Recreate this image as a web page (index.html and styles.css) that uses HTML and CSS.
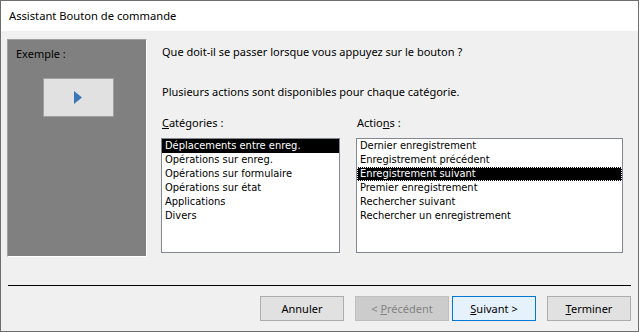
FILE: index.html
```html
<!DOCTYPE html>
<html lang="fr">
<head>
<meta charset="utf-8">
<title>Assistant Bouton de commande</title>
<link rel="stylesheet" href="styles.css">
</head>
<body>
<div class="window">
  <div class="titlebar">Assistant Bouton de commande</div>
  <div class="body">
    <div class="main">
      <div class="example">
        <div class="example-label">Exemple :</div>
        <div class="example-btn">
          <svg width="10" height="14" viewBox="0 0 10 14"><polygon points="0,0 8,6.5 0,13" fill="#3b77b7"/></svg>
        </div>
      </div>
      <div class="right">
        <p class="q">Que doit-il se passer lorsque vous appuyez sur le bouton ?</p>
        <p class="info">Plusieurs actions sont disponibles pour chaque catégorie.</p>
        <div class="lists">
          <div class="col col-cat">
            <div class="label"><u>C</u>atégories :</div>
            <ul class="listbox">
              <li class="sel">Déplacements entre enreg.</li>
              <li>Opérations sur enreg.</li>
              <li>Opérations sur formulaire</li>
              <li>Opérations sur état</li>
              <li>Applications</li>
              <li>Divers</li>
            </ul>
          </div>
          <div class="col col-act">
            <div class="label">Actio<u>n</u>s :</div>
            <ul class="listbox">
              <li>Dernier enregistrement</li>
              <li>Enregistrement précédent</li>
              <li class="sel focus">Enregistrement suivant</li>
              <li>Premier enregistrement</li>
              <li>Rechercher suivant</li>
              <li>Rechercher un enregistrement</li>
            </ul>
          </div>
        </div>
      </div>
    </div>
    <div class="sep"></div>
    <div class="buttons">
      <button class="btn">Annuler</button>
      <button class="btn btn-wide disabled">&lt; <u>P</u>récédent</button>
      <button class="btn default"><u>S</u>uivant &gt;</button>
      <button class="btn"><u>T</u>erminer</button>
    </div>
  </div>
</div>
</body>
</html>
```
FILE: styles.css
```css
* { box-sizing: border-box; }
html, body { margin: 0; padding: 0; background: #ffffff; }
body {
  font-family: "Noto Sans", "Open Sans", sans-serif;
  font-size: 11px;
  color: #000;
}
.window {
  width: 639px;
  height: 332px;
  border: 1px solid #6e6e6e;
  display: flex;
  flex-direction: column;
  background: #f0f0f0;
}
.titlebar {
  height: 30px;
  line-height: 30px;
  background: #ffffff;
  padding-left: 8px;
  font-size: 11.2px;
}
.body {
  display: flex;
  flex-direction: column;
}
.main {
  display: flex;
  padding: 8px 0 0 6px;
}
.example {
  width: 140px;
  height: 218px;
  background: #808080;
  border-top: 1px solid #a0a0a0;
  border-left: 1px solid #a0a0a0;
  border-right: 1px solid #ffffff;
  border-bottom: 1px solid #ffffff;
  padding: 6px 0 0 8px;
}
.example-label {
  line-height: 16px;
}
.example-btn {
  margin: 16px 0 0 27px;
  width: 71px;
  height: 39px;
  background: #e1e1e1;
  border: 1px solid #a0a0a0;
  display: flex;
  align-items: center;
  justify-content: center;
  padding-left: 1px;
}
.example-btn svg { display: block; }
.right {
  margin-left: 14px;
  display: flex;
  flex-direction: column;
}
.right p {
  margin: 0;
  padding-left: 1px;
  line-height: 16px;
}
.q { margin-top: 5px !important; }
.info { margin-top: 24px !important; }
.lists {
  display: flex;
  gap: 16px;
  margin-top: 15px;
}
.col { display: flex; flex-direction: column; }
.label {
  line-height: 16px;
  padding-left: 1px;
  margin-bottom: 7px;
}
.listbox {
  list-style: none;
  margin: 0;
  padding: 0;
  height: 115px;
  background: #ffffff;
  border: 1px solid #828790;
  font-family: "DejaVu Sans Condensed", "DejaVu Sans", sans-serif;
  font-stretch: semi-condensed;
  font-size: 11px;
}
.col-cat .listbox { width: 179px; }
.col-act .listbox { width: 267px; }
.listbox li {
  height: 14px;
  line-height: 14px;
  padding-left: 3px;
  white-space: nowrap;
}
.listbox li.sel {
  background: #000000;
  color: #ffffff;
}
.listbox li.focus {
  outline: 1px dotted #ffffff;
  outline-offset: -1px;
}
.sep {
  height: 1px;
  background: #000000;
  margin: 28px 7px 0 7px;
}
.buttons {
  display: flex;
  justify-content: flex-end;
  margin: 10px 7px 0 0;
}
.btn {
  width: 84px;
  height: 25px;
  font-family: "Noto Sans", "Open Sans", sans-serif;
  font-size: 11px;
  color: #000;
  background: #e1e1e1;
  border: 1px solid #adadad;
  padding: 0;
  margin-left: 11px;
}
.btn-wide { width: 94px; }
.btn.disabled {
  background: #cccccc;
  border-color: #bfbfbf;
  color: #838383;
}
.btn.default {
  background: #e5f1fb;
  border-color: #0078d7;
  margin-left: 3px;
}
```
